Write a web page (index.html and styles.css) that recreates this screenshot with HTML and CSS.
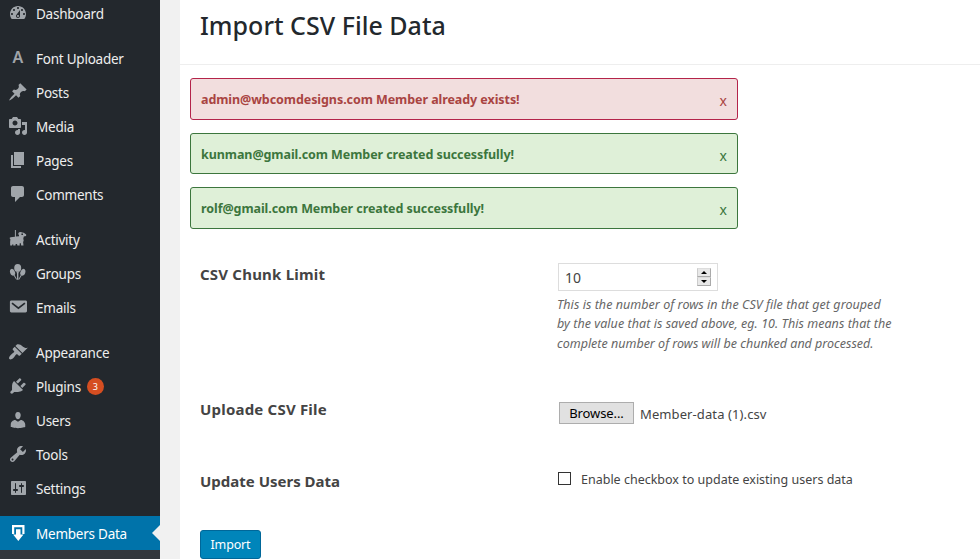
FILE: index.html
```html
<!DOCTYPE html>
<html lang="en">
<head>
<meta charset="utf-8">
<title>Import CSV File Data</title>
<link rel="stylesheet" href="styles.css">
</head>
<body>
<div class="layout">
<nav class="menu">
  <a class="item"><svg viewBox="0 0 20 20"><path fill-rule="evenodd" d="M3.76 16h12.48c1.1-1.37 1.76-3.11 1.76-5 0-4.42-3.58-8-8-8s-8 3.58-8 8c0 1.89.66 3.63 1.76 5zM10 4c.55 0 1 .45 1 1s-.45 1-1 1-1-.45-1-1 .45-1 1-1zM6 6c.55 0 1 .45 1 1s-.45 1-1 1-1-.45-1-1 .45-1 1-1zm8 0c.55 0 1 .45 1 1s-.45 1-1 1-1-.45-1-1 .45-1 1-1zm-5.37 5.55L12 7v6c0 1.1-.9 2-2 2s-2-.9-2-2c0-.57.24-1.08.63-1.45zM4 10c.55 0 1 .45 1 1s-.45 1-1 1-1-.45-1-1 .45-1 1-1zm12 0c.55 0 1 .45 1 1s-.45 1-1 1-1-.45-1-1 .45-1 1-1zm-5 3c0-.55-.45-1-1-1s-1 .45-1 1 .45 1 1 1 1-.45 1-1z"/></svg><span>Dashboard</span></a>
  <a class="item gap"><b class="letter">A</b><span>Font Uploader</span></a>
  <a class="item"><svg viewBox="0 0 20 20"><path d="M10.44 3.02l1.82-1.82 6.36 6.35-1.83 1.82c-1.05-.68-2.48-.57-3.41.36l-.75.75c-.92.93-1.04 2.35-.35 3.41l-1.83 1.82-2.41-2.41-2.8 2.79c-.42.42-3.38 2.71-3.8 2.29s1.86-3.39 2.28-3.81l2.79-2.79L4.1 9.36l1.83-1.82c1.05.69 2.48.57 3.4-.36l.75-.75c.93-.92 1.05-2.35.36-3.41z"/></svg><span>Posts</span></a>
  <a class="item"><svg viewBox="0 0 20 20"><path fill-rule="evenodd" d="M13 11V4c0-.55-.45-1-1-1h-1.67L9 1H5L3.67 3H2c-.55 0-1 .45-1 1v7c0 .55.45 1 1 1h10c.55 0 1-.45 1-1zM7 4.5c1.38 0 2.5 1.12 2.5 2.5S8.38 9.5 7 9.5 4.500 8.380 4.500 7 5.620 4.500 7 4.500zM14 6h5v10.500c0 1.380-1.120 2.500-2.500 2.500S14 17.880 14 16.500s1.120-2.500 2.500-2.500c.17 0 .34.02.5.05V9h-3V6zm-4 8.050V13h2v3.500c0 1.380-1.120 2.500-2.500 2.500S7 17.880 7 16.500 8.120 14 9.500 14c.17 0 .34.02.5.05z"/></svg><span>Media</span></a>
  <a class="item"><svg viewBox="0 0 20 20"><path d="M6 15V2h10v13H6zm-1 1h8v2H3V5h2v11z"/></svg><span>Pages</span></a>
  <a class="item"><svg viewBox="0 0 20 20"><path d="M5 2h9c1.1 0 2 .9 2 2v7c0 1.1-.9 2-2 2h-2l-5 5v-5H5c-1.1 0-2-.9-2-2V4c0-1.1.9-2 2-2z"/></svg><span>Comments</span></a>
  <a class="item gap"><svg viewBox="0 0 20 20"><path fill-rule="evenodd" d="M6.900 1h1v6.600l3.100-.3V5.900l-.9-1 .9-1.600 1.800-.4 1.500.6 1.500.2 1.400 1 1 .8-.1 1.400-2.300.6-.5 2 .4 2.200-.6 1.300.4 3.600h-2.300l-.5-2.500-1.100.4.1 2.100H9.400L9 14.900l-1.300.2-.2 1.500H5.200l.1-1.300-1 .2-.2 1.100H2.200l-.1-3.300.3-3L1.500 9l1.100-.7 4.300-.5zM13.400 4.600v1.400h1.600V4.600z"/></svg><span>Activity</span></a>
  <a class="item"><svg viewBox="0 0 20 20"><ellipse cx="9.700" cy="4.900" rx="3.500" ry="3.900"/><path d="M8.400 8.600h2.600l-.6 2.200v5.900H9v-5.900zM4 5.700C2 6 1.500 8 2.200 9.900c.6 1.900 2 2.900 3.500 2.700l2.600 4.100.6-.4-2.300-4.200C8 10.800 7 8.200 5.500 6.500zM15.400 5.700c2 .3 2.500 2.300 1.800 4.200-.6 1.900-2 2.900-3.500 2.700l-2.600 4.100-.6-.4 2.300-4.200c-1.400-1.300-.4-3.900 1.100-5.600z"/></svg><span>Groups</span></a>
  <a class="item"><svg viewBox="0 0 20 20"><path d="M3.300 3.500h14.200c.9 0 1.500.6 1.500 1.400v9.200c0 .8-.6 1.400-1.500 1.400H3.300c-.8 0-1.400-.6-1.400-1.400V4.900c0-.8.6-1.400 1.400-1.400z"/><path class="cut" d="M4 6.200l6.400 5 6.500-5"/></svg><span>Emails</span></a>
  <a class="item gap"><svg viewBox="0 0 20 20"><path d="M14.480 11.060L7.410 3.990l1.500-1.500c.5-.56 2.300-.47 3.510.32 1.210.8 1.430 1.280 2.910 2.100 1.180.64 2.450 1.260 4.450.85zm-.71.71L6.700 4.700 4.930 6.470c-.39.39-.39 1.020 0 1.410l1.060 1.060c.39.39.39 1.030 0 1.420-.6.6-1.430 1.110-2.210 1.690-.35.26-.7.53-1.010.84C1.430 14.230.4 16.080 1.400 17.070c.99 1 2.840-.03 4.180-1.360.31-.31.58-.66.85-1.020.57-.78 1.080-1.610 1.690-2.210.39-.39 1.020-.39 1.410 0l1.060 1.060c.39.39 1.020.39 1.410 0z"/></svg><span>Appearance</span></a>
  <a class="item"><svg viewBox="0 0 20 20"><path d="M13.110 4.360L9.870 7.600 8 5.730l3.240-3.240c.35-.34 1.050-.2 1.560.32.52.51.66 1.210.31 1.550zm-8 1.770l.91-1.120 9.010 9.010-1.190.84c-.71.71-2.630 1.160-3.820 1.160H6.140L4.900 17.260c-.59.59-1.540.59-2.120 0-.59-.58-.59-1.530 0-2.120l1.240-1.240v-3.880c0-1.130.4-3.190 1.090-3.890zm7.260 3.970l3.240-3.240c.34-.35 1.040-.21 1.550.31.52.51.66 1.210.31 1.550l-3.240 3.250z"/></svg><span>Plugins</span><em class="count">3</em></a>
  <a class="item"><svg viewBox="0 0 20 20"><path d="M10 9.250c-2.270 0-2.730-3.440-2.730-3.440C7 4.020 7.820 2 9.970 2c2.160 0 2.980 2.020 2.710 3.810 0 0-.41 3.440-2.680 3.440zm0 2.570L12.720 10c2.390 0 4.520 2.330 4.520 4.530v2.490s-3.650 1.130-7.240 1.130c-3.650 0-7.240-1.130-7.240-1.130v-2.490c0-2.250 1.940-4.480 4.470-4.480z"/></svg><span>Users</span></a>
  <a class="item"><svg viewBox="0 0 20 20"><path fill-rule="evenodd" d="M16.680 9.770c-1.340 1.340-3.300 1.670-4.950.99l-5.410 6.520c-.99.99-2.590.99-3.580 0s-.99-2.590 0-3.570l6.520-5.420c-.68-1.650-.35-3.610.99-4.950 1.280-1.280 3.120-1.620 4.720-1.060l-2.890 2.890 2.820 2.820 2.860-2.870c.53 1.580.18 3.390-1.080 4.650zM3.810 16.210c.4.390 1.040.390 1.430 0 .4-.4.4-1.040 0-1.430-.39-.4-1.030-.4-1.430 0-.39.390-.39 1.030 0 1.430z"/></svg><span>Tools</span></a>
  <a class="item"><svg viewBox="0 0 20 20"><path fill-rule="evenodd" d="M18 16V4c0-.55-.45-1-1-1H4c-.55 0-1 .45-1 1v12c0 .55.45 1 1 1h13c.55 0 1-.45 1-1zM8 11h1c.55 0 1 .45 1 1s-.45 1-1 1H8v1.500c0 .28-.22.5-.5.5s-.5-.22-.5-.5V13H6c-.55 0-1-.45-1-1s.45-1 1-1h1V5.500c0-.28.22-.5.5-.5s.5.22.5.5V11zm5-2h-1c-.55 0-1-.45-1-1s.45-1 1-1h1V5.500c0-.28.22-.5.5-.5s.5.22.5.5V7h1c.55 0 1 .45 1 1s-.45 1-1 1h-1v5.500c0 .28-.22.5-.5.5s-.5-.22-.5-.5V9z"/></svg><span>Settings</span></a>
  <a class="item gap current"><svg viewBox="0 0 20 20"><path d="M4 2h12.500v9H14.300V4.200H6.200V11H4z"/><path d="M8 6.200h4.500v5.300h3l-5.200 6.500-5.200-6.500H8z"/></svg><span>Members Data</span></a>
  <div class="submenu"></div>
</nav>
<main class="panel">
  <header><h1>Import CSV File Data</h1></header>
  <div class="notices">
    <div class="notice error"><strong>admin@wbcomdesigns.com Member already exists!</strong><span class="close">x</span></div>
    <div class="notice second"><strong>kunman@gmail.com Member created successfully!</strong><span class="close">x</span></div>
    <div class="notice"><strong>rolf@gmail.com Member created successfully!</strong><span class="close">x</span></div>
  </div>
  <form class="form">
    <div class="row limit"><label class="name">CSV Chunk Limit</label>
      <div class="field">
        <div class="number"><span>10</span><div class="spin"><i class="up"></i><i class="down"></i></div></div>
        <p class="help"><span class="wide">This is the number of rows in the CSV file that get grouped</span><br><span class="wide">by the value that is saved above, eg. 10. This means that the</span><br>complete number of rows will be chunked and processed.</p>
      </div>
    </div>
    <div class="row file"><label class="name">Uploade CSV File</label>
      <div class="field upload"><button type="button" class="browse">Browse...</button><span>Member-data (1).csv</span></div>
    </div>
    <div class="row update"><label class="name tight">Update Users Data</label>
      <div class="field check"><i class="box"></i><span>Enable checkbox to update existing users data</span></div>
    </div>
    <button type="button" class="import">Import</button>
  </form>
</main>
</div>
</body>
</html>
```
FILE: styles.css
```css
* { box-sizing: border-box; }
body { margin: 0; background: #f1f1f1; font-family: "Noto Sans", sans-serif; font-size: 13px; color: #444; }
.layout { display: flex; width: 980px; height: 559px; overflow: hidden; }
.menu { width: 160px; flex: none; margin-top: -4px; background: #23282d; color: #eee; height: 563px; display: flex; flex-direction: column; }
.item { display: flex; align-items: center; height: 34px; flex: none; padding-left: 8px; position: relative; }
.item svg { width: 20px; height: 20px; margin-right: 8px; fill: #a0a5aa; }
.item span { line-height: 20px; padding-top: 2px; font-size: 13.5px; letter-spacing: -.24px; }
.gap { margin-top: 11px; }
.cut { fill: none; stroke: #23282d; stroke-width: 1.7; }
.letter { width: 20px; margin-right: 8px; text-align: center; color: #a0a5aa; font-size: 16px; line-height: 20px; font-weight: 600; margin-top: -2px; }
.count { width: 17px; height: 17px; margin-left: 6px; border-radius: 50%; background: #d54e21; color: #fff; font-size: 9px; line-height: 17px; text-align: center; font-style: normal; }
.current { background: #0073aa; color: #fff; }
.current svg { fill: #fff; }
.current::after { content: ""; position: absolute; right: 0; top: 9px; border: 8px solid transparent; border-left: 0; border-right-color: #f1f1f1; }
.submenu { flex: 1; background: #32373c; }
.panel { margin-left: 20px; flex: 1; background: #fff; }
header { height: 65px; border-bottom: 1px solid #eee; padding: 8px 0 0 20px; }
h1 { margin: 0; font-size: 25px; line-height: 34px; font-weight: 500; color: #23282d; letter-spacing: .02px; }
.notices { padding: 13px 0 0 10px; width: 558px; display: flex; flex-direction: column; gap: 13px; }
.notice { height: 42px; border: 1px solid #3c763d; border-radius: 3px; background: #dff0d8; color: #3c763d; display: flex; justify-content: space-between; align-items: center; padding: 0 10px; line-height: 20px; }
.notice.second { height: 41px; }
.notice.error { background: #f2dede; color: #a94442; border-color: #b4244a; }
.notice strong { font-size: 12.5px; letter-spacing: -.07px; padding-top: 2px; white-space: nowrap; }
.close { font-size: 14px; padding-top: 4px; }
.form { padding: 34px 0 0 20px; }
.row { display: grid; grid-template-columns: 357px 1fr; }
.limit { height: 135px; }
.file { height: 72px; }
.update { height: 60px; }
.name { font-size: 15px; font-weight: 700; line-height: 22px; letter-spacing: .2px; }
.tight { letter-spacing: 0; }
.number { width: 160px; height: 28px; margin: 0 0 0 1px; border: 1px solid #ddd; display: flex; justify-content: space-between; align-items: center; padding: 1px 6px 0; font-size: 14px; }
.spin { width: 14px; height: 18px; display: flex; flex-direction: column; margin-top: -1px; }
.spin i { flex: 1; background: #e8e8e8; border: 1px solid #aaa; border-top-color: #ddd; border-left-color: #ccc; display: flex; justify-content: center; align-items: center; }
.spin i::before { content: ""; border: 3px solid transparent; border-top: 0; border-bottom-color: #000; }
.spin .down::before { transform: rotate(180deg); }
.help { margin: 3.5px 0 0; font-size: 12.5px; line-height: 19.5px; font-style: italic; color: #666; white-space: nowrap; }
.wide { letter-spacing: .05px; }
.upload { display: flex; align-items: center; height: 24px; margin: 0 0 0 2px; gap: 6px; padding-top: 6px; }
.upload span { letter-spacing: .1px; padding-top: 2px; }
.browse { width: 75px; height: 22px; flex: none; border: 1px solid #adadad; background: #e1e1e1; color: #000; font: 13px "Noto Sans", sans-serif; letter-spacing: -.1px; padding: 0; }
.check { display: flex; align-items: center; height: 20px; gap: 10px; margin: -2px 0 0 1px; }
.check span { font-size: 12.5px; letter-spacing: 0; padding-top: 2px; }
.box { width: 13px; height: 13px; border: 1px solid #333; }
.import { display: block; width: 61px; height: 29px; border: 1px solid #006799; border-radius: 3px; background: #0085ba; color: #fff; font: 12.5px "Noto Sans", sans-serif; letter-spacing: -.15px; padding: 0; }
```
